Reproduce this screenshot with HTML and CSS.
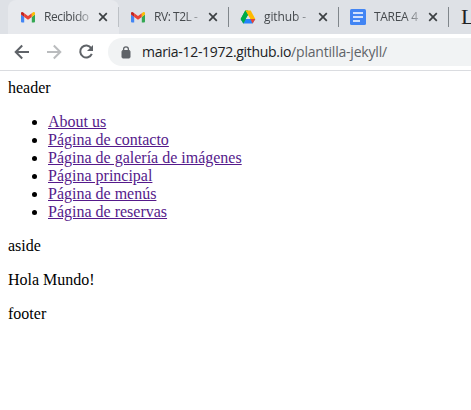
FILE: index.html
```html
<!DOCTYPE html>
<html lang="es">
<head>
<meta charset="utf-8">
<title>plantilla-jekyll</title>
<link rel="stylesheet" href="styles.css">
</head>
<body>
<svg class="defs" aria-hidden="true">
  <symbol id="gmail" viewBox="0 0 16 16">
    <path fill="#4285f4" d="M1 5.5l3.2 2.4V13.5H2a1 1 0 0 1-1-1z"/>
    <path fill="#34a853" d="M15 5.5l-3.2 2.4V13.5H14a1 1 0 0 0 1-1z"/>
    <path fill="#ea4335" d="M4.2 4.2L8 7l3.8-2.8v3.8L8 10.8 4.2 8z"/>
    <path fill="#c5221f" d="M1 4.4C1 2.8 2.7 2.5 3.6 3.7l.6.5V8L1 5.6z"/>
    <path fill="#fbbc04" d="M15 4.4c0-1.6-1.7-1.9-2.6-.7l-.6.5V8L15 5.6z"/>
  </symbol>
  <symbol id="close" viewBox="0 0 10 10">
    <path d="M1.2 1.2l7.6 7.6M8.8 1.2L1.2 8.8" stroke="#3c4043" stroke-width="1.7"/>
  </symbol>
</svg>
<div class="tabs">
  <div class="tab hover">
    <svg class="favicon"><use href="#gmail"/></svg>
    <span class="label recibido">Recibido</span>
    <svg class="close"><use href="#close"/></svg>
  </div>
  <div class="tab">
    <svg class="favicon"><use href="#gmail"/></svg>
    <span class="label rv">RV: T2L -</span>
    <svg class="close"><use href="#close"/></svg>
  </div>
  <div class="tab">
    <svg class="favicon" viewBox="0 0 16 16">
      <path fill="#00ac47" d="M5.3 1.5h2.8v4.7L3.4 14.5.7 10z"/>
      <path fill="#ffba00" d="M5.3 1.5h5.4L15.3 10h-5.1z"/>
      <path fill="#2684fc" d="M.7 10h14.6l-2.7 4.5H3.4z"/>
      <path fill="#00ac47" d="M5.3 1.5L8 6.2 3.4 14.5.7 10z"/>
      <path fill="#ea4335" d="M10.3 10h5l-2.7 4.5z"/>
      <path fill="#dee1e6" d="M8 6.3l2.2 3.7H5.8z"/>
    </svg>
    <span class="label github">github -</span>
    <svg class="close"><use href="#close"/></svg>
  </div>
  <div class="tab">
    <svg class="favicon" viewBox="0 0 16 16">
      <rect width="16" height="16" rx="1.5" fill="#4285f4"/>
      <path d="M3 4h10M3 8h10M3 12h7" stroke="#fff" stroke-width="1.7"/>
    </svg>
    <span class="label tarea">TAREA 4</span>
    <svg class="close"><use href="#close"/></svg>
  </div>
  <div class="tab">
    <span class="letter">L</span>
  </div>
</div>
<div class="toolbar">
  <svg class="nav" viewBox="0 0 16 16"><path d="M15 8H2M8.2 1.5L1.7 8l6.5 6.5" fill="none" stroke="#5f6368" stroke-width="2"/></svg>
  <svg class="nav" viewBox="0 0 16 16"><path d="M1 8h13M7.8 1.5L14.3 8l-6.5 6.5" fill="none" stroke="#babcbe" stroke-width="2"/></svg>
  <svg class="nav reload" viewBox="0 0 16 16"><path d="M13.2 4.1A6 6 0 1 0 13.8 9.8" fill="none" stroke="#5f6368" stroke-width="2"/><path d="M15 1v6H9z" fill="#5f6368"/></svg>
  <div class="address">
    <svg class="lock" viewBox="0 0 10 13"><rect x="1" y="4.5" width="8" height="7.5" rx="1" fill="#5f6368" stroke="#5f6368"/><path d="M2.6 5V3.3a2.4 2.4 0 0 1 4.8 0V5" fill="none" stroke="#5f6368" stroke-width="1.3"/></svg>
    <span class="host">maria-12-1972.github.io</span><span class="path">/plantilla-jekyll/</span>
  </div>
</div>
<main class="page">
  <div>header</div>
  <ul>
    <li><a href="#">About us</a></li>
    <li><a href="#">Página de contacto</a></li>
    <li><a href="#">Página de galería de imágenes</a></li>
    <li><a href="#">Página principal</a></li>
    <li><a href="#">Página de menús</a></li>
    <li><a href="#">Página de reservas</a></li>
  </ul>
  <div>aside</div>
  <p>Hola Mundo!</p>
  <div>footer</div>
</main>
</body>
</html>
```
FILE: styles.css
```css
* { box-sizing: border-box; }
body { margin: 0; background: #fff; overflow: hidden; }
svg { display: block; flex: none; }
.defs { display: none; }
.tabs {
  display: flex;
  height: 34px;
  padding-left: 8px;
  background: #dee1e6;
  overflow: hidden;
}
.tab {
  display: flex;
  align-items: center;
  flex: none;
  width: 111px;
  height: 34px;
  margin-right: -1px;
  padding: 0 0 0 12px;
  background: linear-gradient(#80868b, #80868b) right 0 top 7px / 1px 20px no-repeat;
}
.tab.hover {
  border-radius: 8px 8px 0 0;
  background: linear-gradient(#bdc1c6, #bdc1c6) right 0 top 7px / 1px 20px no-repeat, #e7e9ed;
}
.favicon { width: 16px; height: 16px; }
.label {
  width: 47px;
  margin: 0 4px 0 8px;
  white-space: pre;
  font: 12px/18px "Open Sans", "Noto Sans", sans-serif;
  color: #45494d;
  -webkit-mask-image: linear-gradient(90deg, #000 65%, rgba(0, 0, 0, 0.25));
  mask-image: linear-gradient(90deg, #000 65%, rgba(0, 0, 0, 0.25));
}
.recibido { letter-spacing: -0.4px; }
.rv { letter-spacing: -0.45px; }
.github { letter-spacing: -0.1px; }
.tarea { letter-spacing: -0.3px; }
.close { width: 10px; height: 10px; margin-left: 3px; }
.letter { margin-left: 1px; font: 22px/32px "Liberation Serif", serif; color: #202124; }
.toolbar {
  display: flex;
  align-items: center;
  gap: 16px;
  height: 37px;
  padding-left: 14px;
  border-bottom: 1px solid #dadce0;
}
.nav { width: 16px; height: 16px; }
.address {
  display: flex;
  align-items: center;
  flex: 1;
  height: 28px;
  margin-left: -2px;
  padding-left: 13px;
  border-radius: 14px 0 0 14px;
  background: #f1f3f4;
  font: 14px/20px "Open Sans", "Noto Sans", sans-serif;
}
.lock { width: 10px; height: 13px; margin-right: 11px; }
.host { color: #202124; letter-spacing: -0.3px; }
.path { color: #5f6368; letter-spacing: -0.2px; }
.page {
  padding: 8px;
  font: 16px/18px "Liberation Serif", serif;
  color: #000;
}
.page ul { margin: 16px 0; padding-left: 40px; }
.page p { margin: 16px 0; }
.page a { color: #551a8b; }
```
